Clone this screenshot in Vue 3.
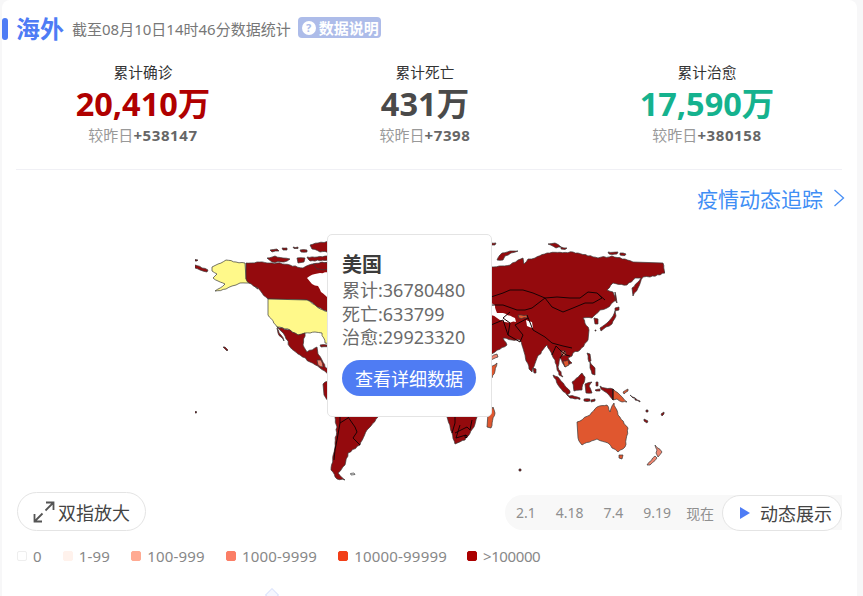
<script setup>
const DARK = '#940a0d'
const ORG = '#e0572f'
const SAL = '#ee8670'
const YEL = '#fff98a'
const stats = [
  { label: '累计确诊', num: '20,410万', delta: '+538147', cls: 'red' },
  { label: '累计死亡', num: '431万', delta: '+7398', cls: 'grey' },
  { label: '累计治愈', num: '17,590万', delta: '+380158', cls: 'green' }
]
const ticks = ['2.1', '4.18', '7.4', '9.19', '现在']
const legend = [
  { t: '0', c: '#ffffff', b: '#eeeeee' },
  { t: '1-99', c: '#fff2ec', b: '#fff2ec' },
  { t: '100-999', c: '#ffaa92', b: '#ffaa92' },
  { t: '1000-9999', c: '#fb7e66', b: '#fb7e66' },
  { t: '10000-99999', c: '#f23f18', b: '#f23f18' },
  { t: '>100000', c: '#ab0000', b: '#ab0000' }
]
const raw = [
  // Alaska and Aleutians
  { f: YEL, d: 'M212 267L218 264L226 260L236 262L245 263L246 279L252 282L258 289L254 285L250 283L246 283L240 283L236 285L232 286L226 289L215 291L225 284L218 281L213 278L217 274L212 271Z' },
  { f: DARK, d: 'M195 265L202 268L208 270L207 272L200 270L195 268Z' },
  { f: DARK, d: 'M195 259.500L198 260L197 261L195 261Z' },
  // Canada
  { f: DARK, d: 'M246 263L257 262L267 263L277 263L290 265L303 268L312 264L323 263L330 262L330 313L323 310L315 305L307 300L268 299L262 293L256 287L249 283L246 279Z' },
  { f: '#fff', s: 'none', d: 'M330 272L315 274L307 278L312 284L318 286L321 292L327 297L330 298Z' },
  { f: DARK, d: 'M270 250L277 249L279 251L272 252Z' },
  { f: DARK, d: 'M282 248L287 248L287 250L283 250Z' },
  { f: DARK, d: 'M293 247L298 247L298 248.500L294 248.500Z' },
  { f: DARK, d: 'M300 250L307 250L307 252L301 252Z' },
  { f: DARK, d: 'M310 245L318 243L330 241L330 252L320 252L312 249Z' },
  { f: DARK, d: 'M267 258L275 256L283 258L290 259L284 262L272 262Z' },
  { f: DARK, d: 'M297 258L305 258L304 262L298 263Z' },
  { f: DARK, d: 'M307 257L330 256L330 260L310 261Z' },
  { f: DARK, d: 'M313 264L322 262L330 263L330 270L317 269Z' },
  // USA
  { f: YEL, d: 'M268 299L307 300L315 305L323 310L330 313L330 343L325 343L322 333L315 332L305 333L298 335L290 330L277 327L268 315Z' },
  // Mexico & Central America
  { f: DARK, d: 'M277 327L290 330L298 335L305 333L303 345L307 352L317 347L318 354L322 360L325 367L330 372L330 376L320 368L310 362L300 355L290 347L285 336L281 331Z' },
  { f: DARK, d: 'M277 328L281 335L284 341L281 337L278 333Z' },
  { f: SAL, d: 'M317 360L321 360L323 367L318 365Z' },
  { f: DARK, d: 'M320 345L327 345L330 347L321 347Z' },
  // South America
  { f: DARK, d: 'M323 384L330 380L330 410L345 414L380 414L378 417L367 430L360 445L348 453L345 465L338 473L345 480L337 479L331 470L335 443L337 427L332 405L324 395Z' },
  { f: '#fff', d: 'M350.500 473.500L354 473L355 474.500L351 475Z' },
  // Africa
  { f: DARK, d: 'M440 410L480 410L477 417L474 427L465 440L455 444L452 433L447 417Z' },
  { f: ORG, d: 'M493 407L495 413L491 428L487 427L488 413Z' },
  { f: ORG, d: 'M497 363L495 371L492 378L490 378L490 367Z' },
  // Eurasia
  { f: DARK, d: 'M480 267L491 267L510 265L518 260L523 258L524 264L528 259L535 258L547 253L573 252L578 253L598 258L612 256L625 259L633 262L663 263L665 273L650 277L643 277L638 288L633 296L632 288L641 278L635 278L627 285L613 283L607 290L613 292L616 300L607 308L600 310L592 318L583 318L589 330L588 340L580 350L573 353L572 356L568 358L572 363L565 367L560 358L558 367L563 377L559 375L555 360L552 355L547 345L545 347L537 358L532 372L529 369L525 355L520 340L512 340L503 338L507 345L495 352L490 356L480 356Z' },
  { f: SAL, d: 'M491 357L497 354L498 357L491 360Z' },
  { f: '#fff', s: 'none', d: 'M491 303L495 305L497 313L503 313L515 318L516 322L505 322L497 318L491 315Z' },
  { f: '#fff', s: 'none', d: 'M526 320L532 322L533 328L527 326Z' },
  { f: ORG, d: 'M518 315L527 315L527 318L519 318Z' },
  { f: SAL, d: 'M561 351L565 351L566 355L562 356Z' },
  { f: ORG, d: 'M563 361L568 360L569 365L565 367Z' },
  // Arctic Russia
  { f: DARK, d: 'M497 260L502 253L510 251L518 251L511 253L505 256L503 260Z' },
  { f: DARK, d: 'M548 244L555 243L561 247L556 248Z' },
  { f: DARK, d: 'M561 247L567 248L565 249.500L561 249Z' },
  { f: DARK, d: 'M608 252L618 252L617 254L609 254Z' },
  { f: DARK, d: 'M620 253L626 254L625 255.500L620 255Z' },
  { f: DARK, d: 'M491 243L496 243L495 245L491 245Z' },
  // Japan, Korea, Sakhalin
  { f: DARK, d: 'M594 318L598 319L598 324L595 324Z' },
  { f: DARK, d: 'M600 328L607 323L613 316L615 311L616 316L612 324L606 327L601 331Z' },
  { f: DARK, d: 'M615 308L619 307L619 310L615 311Z' },
  { f: DARK, d: 'M615 292L616 296L617 303L615 300Z' },
  // Islands SE Asia
  { f: DARK, d: 'M533 368L536 369L536 373L534 373Z' },
  { f: DARK, d: 'M553 375L558 377L570 391L570 393L567 395L558 385Z' },
  { f: DARK, d: 'M567 395L580 398L580 399.500L570 398Z' },
  { f: DARK, d: 'M572 382L582 373L585 377L582 390L574 391Z' },
  { f: DARK, d: 'M585 384L592 382L589 386L592 393L586 393Z' },
  { f: DARK, d: 'M587 353L590 354L591 361L589 362Z' },
  { f: DARK, d: 'M590 362L595 368L595 375L592 374L590 368Z' },
  { f: DARK, d: 'M600 386L605 388L613 389L613 400L607 393L601 389Z' },
  { f: ORG, d: 'M613 389L620 395L627 402L622 402L617 399L613 400Z' },
  { f: ORG, d: 'M623 392L628 389L628 391L624 394Z' },
  { f: DARK, d: 'M584 399L590 399L590 401L584 401Z' },
  { f: DARK, d: 'M591 400L595 399L595 401L591 402Z' },
  { f: DARK, d: 'M595 390L600 389L600 391L596 391Z' },
  { f: DARK, d: 'M596 382L598 382L598 386L596 386Z' },
  // Pacific islands
  { f: DARK, d: 'M630 395L635 398L633 398Z' },
  { f: DARK, d: 'M635 398L640 401L640 402L635 400Z' },
  { f: DARK, d: 'M646 410L648 410L648 412L646 412Z' },
  { f: DARK, d: 'M644 419L648 421L647 423L644 421Z' },
  { f: DARK, d: 'M661 414L664 412L664 414L662 416Z' },
  // Australia / NZ
  { f: ORG, d: 'M577 422L590 415L597 407L607 405L610 412L614 403L618 415L628 428L625 447L618 452L612 448L608 443L597 439L582 445L578 438Z' },
  { f: ORG, d: 'M619 455L623 455L622 459L619 458Z' },
  { f: SAL, d: 'M655 445L662 452L658 457L656 453L657 450Z' },
  { f: SAL, d: 'M655 456L657 458L650 465L647 465Z' },
  // Specks
  { f: DARK, d: 'M223 347L225 347L228 350L227 351L225 349Z' },
  { f: DARK, d: 'M195 411.500L196.500 411.500L196.500 413L195 413Z' },
  { f: DARK, d: 'M519 469L521 469L521 471L519 471Z' },
  { f: DARK, d: 'M595 330L596 330L596 331L595 331Z' }
]
// roughen long coast segments with repeatable noise; straight borders stay straight
function rough(d) {
  const pts = d.match(/-?[\d.]+/g).map(Number)
  const out = []
  for (let i = 0; i < pts.length; i += 2) {
    const x = pts[i], y = pts[i + 1]
    const j = (i + 2) % pts.length
    const nx = pts[j], ny = pts[j + 1]
    out.push(`${x} ${y}`)
    const dx = nx - x, dy = ny - y
    const len = Math.hypot(dx, dy)
    if (len < 5 || Math.abs(dx) <= 1.5 || Math.abs(dy) <= 1.5 && len > 30) continue
    const n = Math.floor(len / 2.5)
    for (let k = 1; k < n; k++) {
      const t = k / n
      const h = Math.sin((x + k) * 12.9898 + (y + k) * 78.233) * 43758.5453
      const a = ((h - Math.floor(h)) - 0.5) * 1.3
      out.push(`${(x + dx * t - dy / len * a).toFixed(1)} ${(y + dy * t + dx / len * a).toFixed(1)}`)
    }
  }
  return 'M' + out.join('L') + 'Z'
}
const shapes = raw.map(s => ({ ...s, d: rough(s.d) }))
const borders = [
  'M491 297L503 293L510 290L523 290L533 293L545 298L557 297L570 298L580 298L588 292L597 293L605 300',
  'M545 298L552 307L563 312L573 308L585 303L593 303L602 298L597 293',
  'M491 305L503 305L517 310L525 310L532 308L545 298',
  'M510 312L503 318L510 323L508 335L520 342L523 335L515 325L528 318',
  'M527 315L533 330L545 337L552 343L563 346L572 348',
  'M552 355L556 346L561 351L566 355L570 356',
  'M560 358L565 351',
  'M491 325L503 320L508 335',
  'M613 389L613 400',
  'M348 417L355 427L357 432L353 438L360 445',
  'M348 418L340 423L337 440L335 450L334 460',
  'M340 417L340 423',
  'M455 417L455 423L452 433',
  'M455 433L467 427L470 430L472 420',
  'M460 425L456 438L466 435',
  'M465 435.500L467 435.500L467 437.500L465 437.500Z'
]
</script>

<template>
  <div class="card">
    <div class="head">
      <span class="bar"></span>
      <h1 class="title">海外</h1>
      <span class="sub">截至08月10日14时46分数据统计</span>
      <span class="badge"><i class="q">?</i>数据说明</span>
    </div>

    <div class="stats">
      <div v-for="s in stats" :key="s.label" class="stat">
        <div class="label">{{ s.label }}</div>
        <div class="num" :class="s.cls">{{ s.num }}</div>
        <div class="delta">较昨日<b>{{ s.delta }}</b></div>
      </div>
    </div>

    <div class="rule"></div>

    <div class="link">
      <span>疫情动态追踪</span>
      <svg width="12" height="18" viewBox="0 0 12 18"><path d="M1.500 1L10.500 9L1.500 17" fill="none" stroke="#4a90f5" stroke-width="1.300"/></svg>
    </div>

    <div class="map">
      <svg class="world" width="470" height="252" viewBox="195 234 470 252">
        <path v-for="(p, i) in shapes" :key="i" :d="p.d" :fill="p.f" :stroke="p.s || '#3a3a3a'" stroke-width="0.7" stroke-linejoin="round"/>
        <path v-for="(b, i) in borders" :key="'b' + i" :d="b" fill="none" stroke="#1a0204" stroke-width="1"/>
      </svg>
      <div class="tip">
        <div class="tip-name">美国</div>
        <div class="tip-row">累计:36780480</div>
        <div class="tip-row">死亡:633799</div>
        <div class="tip-row">治愈:29923320</div>
        <div class="tip-btn">查看详细数据</div>
      </div>
    </div>

    <div class="tools">
      <div class="pill zoom">
        <svg width="22" height="22" viewBox="0 0 22 22"><path d="M13 1.500H20.500V9M20.500 1.500L12.500 9.500M9 20.500H1.500V13M1.500 20.500L9.500 12.500" fill="none" stroke="#555" stroke-width="1.800"/></svg>
        <span>双指放大</span>
      </div>
      <div class="timeline">
        <div class="ticks">
          <span v-for="t in ticks" :key="t">{{ t }}</span>
        </div>
        <div class="pill play">
          <svg width="10" height="12" viewBox="0 0 10 12"><path d="M0 0L10 6L0 12Z" fill="#4e7cf5"/></svg>
          <span>动态展示</span>
        </div>
      </div>
    </div>

    <div class="legend">
      <div v-for="l in legend" :key="l.t" class="leg">
        <i :style="{ background: l.c, borderColor: l.b }"></i>
        <span>{{ l.t }}</span>
      </div>
    </div>

    <span class="caret"></span>
  </div>
</template>

<style>
html, body { margin: 0; background: #f7f7f8; overflow: hidden; }
</style>

<style scoped>
.card {
  position: relative;
  box-sizing: border-box;
  width: 855px;
  height: 596px;
  margin-left: 2px;
  padding: 14px 14px 0;
  background: #fff;
  border-radius: 8px 8px 0 0;
  overflow: hidden;
  font-family: "Noto Sans", "Noto Sans CJK SC", sans-serif;
  color: #444;
}
.head { display: flex; align-items: center; height: 30px; }
.bar {
  width: 6px; height: 22px; margin-left: -14px; margin-right: 9px;
  border-radius: 3px; background: #4e7cf5;
}
.title { margin: 0 8px 0 -1px; font-size: 24px; line-height: 30px; font-weight: 700; color: #4e7cf5; }
.sub { font-size: 15px; color: #777; margin: -2px 7px 0 0; }
.badge {
  display: flex; align-items: center; box-sizing: border-box;
  width: 83px; height: 21px; padding-left: 4px;
  border-radius: 4px; background: #adbce9; color: #fff;
  font-size: 15px; font-weight: 700; white-space: nowrap; margin-top: -3px;
}
.q {
  display: flex; align-items: center; justify-content: center;
  width: 14px; height: 14px; margin-right: 3px; border-radius: 50%;
  background: #fff; color: #adbce9; font-style: normal; font-size: 11px; line-height: 14px;
}
.stats { display: grid; grid-template-columns: repeat(3, 282px); margin: 17px 0 0 -14px; }
.stat { text-align: center; }
.label { font-size: 14.700px; line-height: 22px; color: #333; }
.num { font-size: 32.500px; line-height: 42px; font-weight: 700; }
.red { color: #b00000; }
.grey { color: #4a4a4a; }
.green { color: #15b28e; }
.delta { font-size: 15px; line-height: 20px; color: #999; }
.delta b { color: #666; letter-spacing: 0.6px; font-size: 15px; }
.rule { height: 1px; background: #f0f0f5; margin-top: 24px; width: 826px; }
.link {
  display: flex; align-items: center; justify-content: flex-end; gap: 10px;
  width: 829px; height: 28px; margin-top: 14px;
  font-size: 21px; color: #3f8ef5;
}
.map { position: relative; width: 470px; height: 252px; margin: 22px 0 0 179px; }
.world { display: block; }
.tip {
  position: absolute; left: 132px; top: 0;
  box-sizing: border-box; width: 165px; height: 183px;
  padding: 15px 14px 0;
  background: #fff; border: 1px solid #e4e4e4; border-radius: 5px;
}
.tip-name { font-size: 20px; line-height: 29px; font-weight: 700; color: #3c3c3c; }
.tip-row { font-size: 18px; line-height: 23.500px; color: #6a6a6a; }
.tip-btn {
  display: flex; align-items: center; justify-content: center;
  width: 134px; height: 36px; margin-top: 10px;
  border-radius: 18px; background: #4f7cf3; color: #fff; font-size: 18px;
}
.tools { display: flex; justify-content: space-between; align-items: flex-start; width: 825px; margin-top: 6px; margin-left: 1px; }
.pill {
  display: flex; align-items: center; box-sizing: border-box;
  background: #fff; border: 1px solid #e4e4e4; font-size: 18px; color: #444;
}
.zoom { width: 129px; height: 39px; border-radius: 20px; padding-left: 15px; gap: 3px; }
.timeline {
  display: flex; align-items: center; height: 35px; margin-top: 3px;
  width: 337px; background: #f8f8f8; border-radius: 18px 0 0 18px;
  justify-content: space-between;
}
.ticks { display: flex; gap: 20px; padding-left: 11px; font-size: 14px; color: #8f8f8f; white-space: nowrap; }
.ticks span:last-child { margin-left: -5px; }
.play { width: 120px; height: 36px; border-radius: 18px; padding-left: 17px; gap: 10px; }
.legend { display: flex; gap: 21px; margin-top: 15px; margin-left: 1px; font-size: 15px; color: #888; line-height: 20px; letter-spacing: 0.2px; }
.leg { display: flex; align-items: center; gap: 6px; }
.leg:last-child { margin-left: -1px; letter-spacing: -0.4px; }
.leg i { display: block; box-sizing: border-box; width: 10px; height: 10px; border: 1px solid; border-radius: 2px; }
.caret {
  position: absolute; left: 265px; top: 590px;
  width: 10px; height: 10px; transform: rotate(45deg);
  background: #f5f7ff; border: 1px solid #dbe3fb; box-sizing: border-box;
}
</style>
